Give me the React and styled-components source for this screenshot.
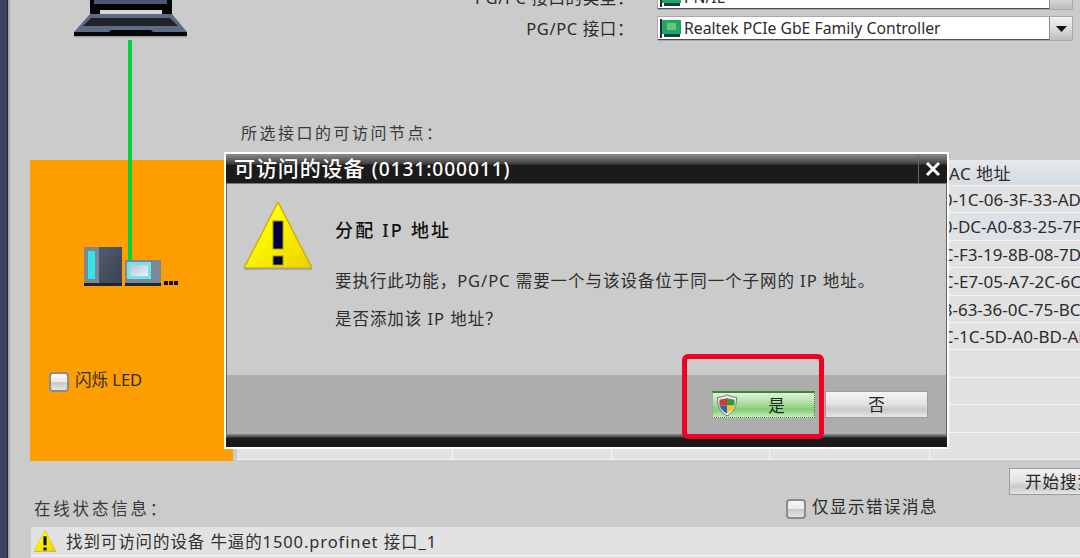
import React from 'react';
import styled, { createGlobalStyle } from 'styled-components';

const sansStack = '"Noto Sans", "Noto Sans CJK SC", sans-serif';

const GlobalStyle = createGlobalStyle`
  html, body {
    margin: 0;
    padding: 0;
    background: #cbcbcb;
  }
  * {
    box-sizing: border-box;
  }
`;

const Page = styled.div`
  position: relative;
  display: flex;
  width: 1080px;
  height: 558px;
  overflow: hidden;
  background: #cbcbcb;
  color: #2c2c2c;
  font-family: ${sansStack};
  font-size: 16.5px;
`;

const SideStrip = styled.div`
  flex: none;
  width: 10px;
  background: #37435f;
  border-right: 2px solid #a9a9a9;
  box-shadow: inset -1px 0 0 #23262e;
`;

const Main = styled.div`
  flex: 1;
  min-width: 0;
  padding-left: 20px;
`;

const Workspace = styled.div`
  display: flex;
  gap: 4px;
  height: 461px;
`;

const LeftColumn = styled.div`
  position: relative;
  flex: none;
  width: 203px;
`;

const LaptopZone = styled.div`
  height: 160px;
  padding-left: 44px;
  svg {
    display: block;
  }
`;

const Cable = styled.div`
  position: absolute;
  left: 98px;
  top: 40px;
  width: 4px;
  height: 222px;
  background: #00d43c;
`;

const DevicePanel = styled.div`
  height: 301px;
  padding: 87px 0 0 19px;
  background: #ff9e00;
`;

const DeviceBox = styled.div`
  position: relative;
  z-index: 1;
  height: 41px;
  margin-left: 35px;
  svg {
    display: block;
  }
`;

const CheckRow = styled.label`
  display: flex;
  align-items: center;
  gap: 6px;
  height: 20px;
  margin-top: ${props => props.$top || 0}px;
  letter-spacing: ${props => props.$spacing || 0}px;
`;

const CheckBox = styled.span`
  flex: none;
  width: 20px;
  height: 20px;
  border: 2px solid #8b8b8b;
  border-radius: 4px;
  background: linear-gradient(#fafafa, #e8e8e8 48%, #c8c8c8 52%, #e4e4e4);
`;

const CheckText = styled.span`
  margin-top: -4px;
  line-height: 20px;
`;

const RightColumn = styled.div`
  flex: 1;
  min-width: 0;
`;

const Form = styled.div`
  display: flex;
  flex-direction: column;
  gap: 6px;
  height: 175px;
  margin-top: -15px;
`;

const FormRow = styled.div`
  display: grid;
  grid-template-columns: 1fr 416px;
  height: 25px;
  margin-right: 7px;
`;

const FormLabel = styled.div`
  padding-right: 23px;
  line-height: 25px;
  text-align: right;
  letter-spacing: 0.6px;
  white-space: nowrap;
`;

const Select = styled.div`
  display: flex;
  height: 25px;
  border: 1px solid #a8a8a8;
  border-radius: 1px;
`;

const SelectValue = styled.div`
  flex: 1;
  display: flex;
  align-items: center;
  gap: 2px;
  padding-left: 1px;
  background: #fff;
  border-bottom: 1px solid #47505e;
  color: #2b2b2b;
  font-size: 15.75px;
`;

const SelectButton = styled.div`
  flex: none;
  display: flex;
  align-items: center;
  justify-content: center;
  width: 23px;
  background: linear-gradient(#f2f2f2, #dcdcdc 50%, #bcbcbc);
  border-left: 1px solid #8c8c8c;
`;

const Caption = styled.div`
  height: 20px;
  margin: -37px 0 17px 4px;
  font-size: 16px;
  line-height: 20px;
  letter-spacing: 2.5px;
  color: #3a3a3a;
`;

const Table = styled.div`
  display: grid;
  grid-template-columns: 216px 159px 158px 160px 1fr;
  height: 300px;
  background: #e1e1e1;
  font-size: 17px;
`;

const HeaderCell = styled.div`
  height: 26px;
  padding-left: 3px;
  background: linear-gradient(#e6e8ea, #d5dbe0);
  border-right: 1px solid #f4f4f4;
  border-bottom: 1px solid #f4f4f4;
  line-height: 27px;
  letter-spacing: 0.5px;
  white-space: nowrap;
`;

const Cell = styled.div`
  height: 27.4px;
  padding-left: 3px;
  background: ${props => (props.$tinted ? '#dce2e6' : '#e2e2e2')};
  border-right: 1px solid #f4f4f4;
  border-bottom: 1px solid #f4f4f4;
  line-height: 28px;
  white-space: nowrap;
`;

const SearchRow = styled.div`
  display: flex;
  justify-content: flex-end;
  height: 26px;
  margin: 7px -31px 0 0;
`;

const PlainButton = styled.div`
  display: flex;
  align-items: center;
  justify-content: center;
  flex: none;
  width: ${props => props.$width}px;
  height: 27px;
  padding-bottom: 1px;
  border: 1px solid #9c9c9c;
  background: linear-gradient(#f4f4f4, #e2e2e2 48%, #cacaca 70%, #e6e6e6);
  color: #262626;
  letter-spacing: ${props => props.$spacing || 0}px;
  white-space: nowrap;
`;

const OptionsRow = styled.div`
  display: flex;
  align-items: center;
  justify-content: space-between;
  height: 20px;
  margin-top: 5px;
  padding: 0 142px 0 4px;
`;

const SectionLabel = styled.div`
  margin-top: -2px;
  letter-spacing: 2.8px;
  color: #3a3a3a;
`;

const StatusList = styled.div`
  margin-top: 8px;
  margin-left: 1px;
`;

const StatusRow = styled.div`
  display: flex;
  align-items: center;
  gap: 10px;
  height: 29px;
  padding-left: 3px;
  background: #e2e2e2;
  border-bottom: 1px solid #f6f6f6;
  letter-spacing: 0.9px;
  color: #303030;
`;

const InfoDot = styled.span`
  flex: none;
  width: 8px;
  height: 8px;
  margin: 3px 0 0 7px;
  border-radius: 50%;
  background: #3c6fb0;
`;

const Dialog = styled.div`
  position: absolute;
  left: 224px;
  top: 152px;
  display: flex;
  flex-direction: column;
  width: 725px;
  height: 297px;
  border: 2.5px solid #fff;
  background: #cbcbcb;
`;

const TitleBar = styled.div`
  flex: none;
  display: flex;
  align-items: center;
  justify-content: space-between;
  height: 30px;
  padding-left: 8px;
  background: linear-gradient(#8c8c8c, #3e3e3e 10px, #1b1b1b 11px);
  border-bottom: 1px solid #777;
`;

const DialogTitle = styled.div`
  color: #fff;
  font-size: 21px;
  font-weight: 500;
  line-height: 26px;
  letter-spacing: 0.9px;
  white-space: nowrap;
`;

const TitleCode = styled.span`
  font-size: 19.2px;
`;

const CloseBox = styled.div`
  display: flex;
  align-items: center;
  justify-content: center;
  width: 29px;
  height: 29px;
  padding: 1px 1px 0 0;
  border-left: 1px solid #666;
`;

const DialogBody = styled.div`
  flex: 1;
  display: flex;
  align-items: flex-start;
  gap: 23px;
  padding: 18px 0 0 17px;
  border-left: 1px solid #666;
  border-right: 1px solid #666;
`;

const DialogText = styled.div`
  padding-top: 16px;
`;

const DialogHeading = styled.div`
  color: #111;
  font-size: 18px;
  font-weight: 500;
  line-height: 24px;
  letter-spacing: 2.2px;
`;

const DialogLine = styled.div`
  margin-top: ${props => props.$top}px;
  line-height: 22px;
  letter-spacing: 0.95px;
  color: #2e2e2e;
  white-space: nowrap;
`;

const DialogFooter = styled.div`
  flex: none;
  display: flex;
  justify-content: flex-end;
  gap: 10px;
  height: 59px;
  padding: 16px 18px 0 0;
  background: #adadad;
  border-left: 1px solid #666;
  border-right: 1px solid #666;
`;

const BottomBar = styled.div`
  flex: none;
  height: 13px;
  background: linear-gradient(#8a8a8a, #4a4a4a 3px, #1b1b1b 4px);
`;

const ConfirmButton = styled.div`
  display: flex;
  align-items: center;
  flex: none;
  width: 103px;
  height: 27px;
  padding-left: 2px;
  border-top: 2px solid #2f8a2a;
  border-left: 1px solid #8fb58a;
  border-right: 1px dotted #4f6f4a;
  border-bottom: 1px dotted #4f6f4a;
  background: linear-gradient(#e4f3de, #a9dc9c 45%, #86cc7a 70%, #c4ecb8);
  color: #1e2a1c;
  svg {
    flex: none;
  }
`;

const ConfirmLabel = styled.span`
  flex: 1;
  text-align: center;
`;

const RedFrame = styled.div`
  position: absolute;
  left: 456px;
  top: 199.5px;
  width: 142px;
  height: 85px;
  border: 5.5px solid #ee0022;
  border-radius: 6px;
`;

const macRows = [
  '00-1C-06-3F-33-AD',
  '00-DC-A0-83-25-7F',
  '0C-F3-19-8B-08-7D',
  '0C-E7-05-A7-2C-6C',
  '38-63-36-0C-75-BC',
  '0C-1C-5D-A0-BD-AE',
  '',
  '',
  '',
  ''
];

const WarningIcon = ({ size, mark = '#000040' }) => (
  <svg width={size} height={size} viewBox="0 0 68 68" style={{ flex: 'none' }}>
    <defs>
      <linearGradient id={`warn${size}`} x1="0" y1="0" x2="1" y2="1">
        <stop offset="0.3" stopColor="#ffff00" />
        <stop offset="1" stopColor="#eccf00" />
      </linearGradient>
    </defs>
    <path d="M34 0 L68 66 L0 66 Z" fill={`url(#warn${size})`} stroke="#c9b300" strokeWidth="1.5" />
    <path d="M0 66 H68 V68 H0 Z" fill="#a9a9a9" />
    <rect x="29" y="19" width="10" height="28" fill={mark} stroke="#a58f00" />
    <rect x="29" y="54" width="10" height="9" fill={mark} stroke="#a58f00" />
  </svg>
);

const LaptopIcon = () => (
  <svg width="113" height="38" viewBox="0 0 113 38">
    <rect x="16" y="0" width="82" height="15" fill="#050505" />
    <rect x="20" y="0" width="73" height="4" fill="#4c5870" />
    <rect x="26" y="10" width="62" height="4" fill="#d8d8d8" />
    <path d="M16 14 H98 L113 32 H0 Z" fill="#5d6b84" />
    <path d="M17 18 H96 L104 26 H9 Z" fill="#20242a" />
    <path d="M0 32 H35 L37 30 H77 L79 32 H113 V36 H0 Z" fill="#060606" />
    <rect x="0" y="36" width="113" height="1.5" fill="#a2a2a2" />
  </svg>
);

const DeviceIcon = () => (
  <svg width="96" height="41" viewBox="0 0 96 41">
    <defs>
      <linearGradient id="towerFace" x1="0" y1="0" x2="1" y2="1">
        <stop offset="0" stopColor="#525c70" />
        <stop offset="1" stopColor="#3a4252" />
      </linearGradient>
      <linearGradient id="screenFace" x1="0" y1="0" x2="1" y2="1">
        <stop offset="0" stopColor="#b6c2dc" />
        <stop offset="1" stopColor="#f0f2f6" />
      </linearGradient>
    </defs>
    <rect x="0" y="0" width="15" height="37" fill="#7e8895" />
    <rect x="4" y="4" width="7" height="28" fill="#31e4ec" />
    <rect x="15" y="0" width="23" height="37" fill="url(#towerFace)" />
    <rect x="0" y="36" width="38" height="3" fill="#20242c" />
    <rect x="41" y="13" width="36" height="24" fill="#7c8797" />
    <rect x="43" y="15" width="24" height="17" fill="#6fe4ee" />
    <path d="M46 18 H64 V29 H46 Z" fill="url(#screenFace)" />
    <rect x="41" y="36" width="36" height="3" fill="#20242c" />
    <rect x="80" y="34" width="4" height="4" fill="#0a0a0a" />
    <rect x="85" y="34" width="4" height="4" fill="#0a0a0a" />
    <rect x="90" y="34" width="4" height="4" fill="#0a0a0a" />
  </svg>
);

const CardIcon = () => (
  <svg width="23" height="19" viewBox="0 0 23 19">
    <rect x="1" y="0" width="2" height="19" fill="#20303a" />
    <rect x="3" y="1" width="19" height="14" fill="#1fa567" />
    <rect x="8" y="4" width="9" height="7" fill="#6cc86f" />
    <rect x="5" y="15" width="16" height="3" fill="#1c3a4a" />
  </svg>
);

const ShieldIcon = () => (
  <svg width="24" height="23" viewBox="0 0 24 23">
    <path d="M12 0.8 C15 2.5 18 3.2 21.5 3.2 C22 11 19 18.5 12 22 C5 18.5 2 11 2.5 3.2 C6 3.2 9 2.5 12 0.8 Z" fill="#e8eaec" stroke="#6e7a86" />
    <path d="M12 4 V11.5 H4.6 C4.3 9.5 4.3 7.5 4.6 5.6 C7 5.4 9.6 5 12 4 Z" fill="#d23a2e" />
    <path d="M12 4 C14.4 5 17 5.4 19.4 5.6 C19.7 7.5 19.7 9.5 19.4 11.5 H12 Z" fill="#2f9a3a" />
    <path d="M4.6 11.5 H12 V19.5 C8 17.5 5.5 15 4.6 11.5 Z" fill="#2c66b8" />
    <path d="M12 11.5 H19.4 C18.5 15 16 17.5 12 19.5 Z" fill="#f2c81e" />
  </svg>
);

const App = () => (
  <Page>
    <GlobalStyle />
    <SideStrip />
    <Main>
      <Workspace>
        <LeftColumn>
          <LaptopZone>
            <LaptopIcon />
          </LaptopZone>
          <DevicePanel>
            <DeviceBox>
              <DeviceIcon />
            </DeviceBox>
            <CheckRow $top={84}>
              <CheckBox />
              <CheckText>闪烁 LED</CheckText>
            </CheckRow>
          </DevicePanel>
          <Cable />
        </LeftColumn>

        <RightColumn>
          <Form>
            <FormRow>
              <FormLabel>PG/PC 接口的类型：</FormLabel>
              <Select>
                <SelectValue>
                  <CardIcon />
                  PN/IE
                </SelectValue>
                <SelectButton />
              </Select>
            </FormRow>
            <FormRow>
              <FormLabel>PG/PC 接口：</FormLabel>
              <Select>
                <SelectValue>
                  <CardIcon />
                  Realtek PCIe GbE Family Controller
                </SelectValue>
                <SelectButton>
                  <svg width="11" height="6" viewBox="0 0 11 6">
                    <path d="M0 0 H11 L5.5 6 Z" fill="#111" />
                  </svg>
                </SelectButton>
              </Select>
            </FormRow>
          </Form>
          <Caption>所选接口的可访问节点：</Caption>
          <Table>
            <HeaderCell />
            <HeaderCell />
            <HeaderCell />
            <HeaderCell />
            <HeaderCell>MAC 地址</HeaderCell>
            {macRows.map((mac, index) => (
              <React.Fragment key={index}>
                <Cell $tinted={index === 1} />
                <Cell $tinted={index === 1} />
                <Cell $tinted={index === 1} />
                <Cell $tinted={index === 1} />
                <Cell $tinted={index === 1}>{mac}</Cell>
              </React.Fragment>
            ))}
          </Table>
        </RightColumn>
      </Workspace>

      <SearchRow>
        <PlainButton $width={102} $spacing={1}>开始搜索</PlainButton>
      </SearchRow>

      <OptionsRow>
        <SectionLabel>在线状态信息：</SectionLabel>
        <CheckRow $spacing={1.5}>
          <CheckBox />
          <CheckText>仅显示错误消息</CheckText>
        </CheckRow>
      </OptionsRow>

      <StatusList>
        <StatusRow>
          <WarningIcon size={22} mark="#111" />
          找到可访问的设备 牛逼的1500.profinet 接口_1
        </StatusRow>
        <StatusRow>
          <InfoDot />
        </StatusRow>
      </StatusList>
    </Main>

    <Dialog>
      <TitleBar>
        <DialogTitle>
          可访问的设备 <TitleCode>(0131:000011)</TitleCode>
        </DialogTitle>
        <CloseBox>
          <svg width="16" height="16" viewBox="0 0 16 16">
            <path d="M2 2 L14 14 M14 2 L2 14" stroke="#fff" strokeWidth="3" />
          </svg>
        </CloseBox>
      </TitleBar>
      <DialogBody>
        <WarningIcon size={68} />
        <DialogText>
          <DialogHeading>分配 IP 地址</DialogHeading>
          <DialogLine $top={28}>要执行此功能，PG/PC 需要一个与该设备位于同一个子网的 IP 地址。</DialogLine>
          <DialogLine $top={16}>是否添加该 IP 地址？</DialogLine>
        </DialogText>
      </DialogBody>
      <DialogFooter>
        <ConfirmButton>
          <ShieldIcon />
          <ConfirmLabel>是</ConfirmLabel>
        </ConfirmButton>
        <PlainButton $width={103}>否</PlainButton>
      </DialogFooter>
      <BottomBar />
      <RedFrame />
    </Dialog>
  </Page>
);

export default App;
